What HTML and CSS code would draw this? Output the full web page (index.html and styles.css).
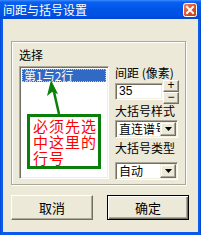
FILE: index.html
```html
<!DOCTYPE html>
<html>
<head>
<meta charset="utf-8">
<link rel="stylesheet" href="styles.css">
</head>
<body>
<div class="window">
  <div class="titlebar">
    <span class="title">间距与括号设置</span>
    <span class="close">
      <svg width="14" height="14" viewBox="0 0 14 14">
        <defs>
          <linearGradient id="cg" x1="0" y1="0" x2="1" y2="1">
            <stop offset="0" stop-color="#F08A6A"/>
            <stop offset="0.5" stop-color="#E0502A"/>
            <stop offset="1" stop-color="#C03A14"/>
          </linearGradient>
        </defs>
        <rect x="0.5" y="0.5" width="13" height="13" rx="2" fill="url(#cg)" stroke="#fff"/>
        <path d="M4 4 L10 10 M10 4 L4 10" stroke="#fff" stroke-width="2" stroke-linecap="square"/>
      </svg>
    </span>
  </div>
  <div class="client">
    <div class="group">
      <div class="col-left">
        <div class="label">选择</div>
        <div class="list">
          <div class="item selected">第1与2行</div>
        </div>
      </div>
      <div class="col-right">
        <div class="label">间距 (像素)</div>
        <div class="spinrow">
          <div class="input">35</div>
          <div class="spin">
            <div class="sbtn">+</div>
            <div class="sbtn">−</div>
          </div>
        </div>
        <div class="label lbl2">大括号样式</div>
        <div class="combo">
          <span class="val">直连谱号</span>
          <span class="drop"><svg width="7" height="4" viewBox="0 0 7 4"><path d="M0 0 H7 L3.5 4 Z" fill="#000"/></svg></span>
        </div>
        <div class="label lbl3">大括号类型</div>
        <div class="combo combo2">
          <span class="val">自动</span>
          <span class="drop"><svg width="7" height="4" viewBox="0 0 7 4"><path d="M0 0 H7 L3.5 4 Z" fill="#000"/></svg></span>
        </div>
      </div>
      <svg class="arrow" width="60" height="80" viewBox="0 0 60 80">
        <path d="M47 72 L42 50" stroke="#0A800A" stroke-width="2.5" fill="none"/>
        <path d="M39 38 L35 54 L40 50 L46 52 Z" fill="#0A800A"/>
      </svg>
      <div class="note">必须先选中这里的行号</div>
    </div>
    <div class="buttons">
      <div class="btn">取消</div>
      <div class="btn default">确定</div>
    </div>
  </div>
</div>
</body>
</html>
```
FILE: styles.css
```css
html, body {
  margin: 0;
  padding: 0;
}
body {
  font-family: "Noto Sans CJK SC", "Liberation Sans", sans-serif;
  font-size: 12px;
  color: #000;
  background: #ECE9D8;
}
.window {
  width: 201px;
  height: 235px;
  box-sizing: border-box;
  display: flex;
  flex-direction: column;
  background: linear-gradient(to right, #0040C8 0, #0A5AEC 1px, #0A5AEC 200px, #0038B8 201px);
}
.titlebar {
  height: 19px;
  flex: none;
  display: flex;
  align-items: center;
  justify-content: space-between;
  padding: 0 4px 0 3px;
  background: linear-gradient(to bottom, #3C8CFF 0, #0A60F0 2px, #0055E8 9px, #0050E2 16px, #0046D0 19px);
}
.title {
  color: #fff;
  font-size: 12px;
  line-height: 19px;
  letter-spacing: 0;
}
.close {
  display: flex;
  width: 14px;
  height: 14px;
}
.client {
  flex: 1;
  margin: 0 3px 3px 3px;
  background: #ECE9D8;
  padding: 22px 0 0 8px;
  display: flex;
  flex-direction: column;
}
.group {
  position: relative;
  width: 175px;
  height: 144px;
  box-sizing: border-box;
  border: 1px solid #ACA899;
  box-shadow: inset 1px 1px 0 #fff, 1px 1px 0 #fff;
  display: flex;
  padding: 6px 0 0 7px;
  gap: 6px;
}
.label {
  line-height: 14px;
  height: 14px;
  white-space: nowrap;
}
.col-left {
  display: flex;
  flex-direction: column;
}
.list {
  margin-top: 4px;
  width: 90px;
  height: 113px;
  box-sizing: border-box;
  background: #fff;
  border-top: 1px solid #ACA899;
  border-left: 1px solid #ACA899;
  border-right: 1px solid #fff;
  border-bottom: 1px solid #fff;
  box-shadow: inset 1px 1px 0 #716F64, inset -1px -1px 0 #F1EFE2;
  padding: 2px;
}
.item {
  height: 13px;
  line-height: 11px;
  box-sizing: border-box;
  padding-left: 1px;
  white-space: nowrap;
}
.item.selected {
  background: #316AC5;
  color: #fff;
  border: 1px dotted #E8C070;
}
.col-right {
  display: flex;
  flex-direction: column;
  padding-top: 18px;
}
.spinrow {
  display: flex;
  align-items: flex-start;
  height: 23px;
}
.input {
  margin-top: 3px;
  width: 48px;
  height: 17px;
  box-sizing: border-box;
  background: #fff;
  border-top: 1px solid #ACA899;
  border-left: 1px solid #ACA899;
  border-right: 1px solid #fff;
  border-bottom: 1px solid #fff;
  box-shadow: inset 1px 1px 0 #716F64, inset -1px -1px 0 #F1EFE2;
  padding-left: 3px;
  line-height: 15px;
  font-family: "Liberation Sans", sans-serif;
  font-size: 12px;
}
.spin {
  display: flex;
  flex-direction: column;
}
.sbtn {
  width: 16px;
  height: 12px;
  box-sizing: border-box;
  background: #ECE9D8;
  border-top: 1px solid #fff;
  border-left: 1px solid #fff;
  border-right: 1px solid #716F64;
  border-bottom: 1px solid #716F64;
  box-shadow: inset -1px -1px 0 #ACA899;
  text-align: center;
  line-height: 9px;
  font-family: "Liberation Sans", sans-serif;
  font-size: 12px;
}
.lbl2 {
  margin-top: 1px;
}
.combo {
  margin-top: 2px;
  width: 63px;
  height: 18px;
  box-sizing: border-box;
  background: #fff;
  border-top: 1px solid #ACA899;
  border-left: 1px solid #ACA899;
  border-right: 1px solid #fff;
  border-bottom: 1px solid #fff;
  box-shadow: inset 1px 1px 0 #716F64, inset -1px -1px 0 #F1EFE2;
  display: flex;
  padding: 1px;
}
.val {
  flex: 1;
  overflow: hidden;
  white-space: nowrap;
  line-height: 14px;
  padding-left: 2px;
}
.drop {
  width: 16px;
  height: 14px;
  flex: none;
  box-sizing: border-box;
  background: #ECE9D8;
  border-top: 1px solid #F1EFE2;
  border-left: 1px solid #F1EFE2;
  border-right: 1px solid #716F64;
  border-bottom: 1px solid #716F64;
  box-shadow: inset -1px -1px 0 #ACA899, inset 1px 1px 0 #fff;
  display: flex;
  align-items: center;
  justify-content: center;
}
.lbl3 {
  margin-top: 3px;
}
.combo2 {
  margin-top: 7px;
}
.arrow {
  position: absolute;
  left: 0;
  top: 0;
}
.note {
  position: absolute;
  left: 15px;
  top: 72px;
  width: 74px;
  height: 55px;
  box-sizing: border-box;
  border: 3px solid #0A800A;
  background: #fff;
  color: #FF0000;
  font-size: 15px;
  line-height: 16px;
  letter-spacing: 1px;
  padding: 1px 0 0 3px;
  word-break: break-all;
}
.buttons {
  display: flex;
  gap: 14px;
  margin-top: 10px;
}
.btn {
  width: 82px;
  height: 25px;
  box-sizing: border-box;
  background: #ECE9D8;
  border-top: 1px solid #fff;
  border-left: 1px solid #fff;
  border-right: 1px solid #716F64;
  border-bottom: 1px solid #716F64;
  box-shadow: inset -1px -1px 0 #ACA899;
  display: flex;
  align-items: center;
  justify-content: center;
  font-size: 13px;
}
.btn.default {
  border: 1px solid #000;
  box-shadow: inset 1px 1px 0 #fff, inset -1px -1px 0 #716F64, inset -2px -2px 0 #ACA899;
}
```
